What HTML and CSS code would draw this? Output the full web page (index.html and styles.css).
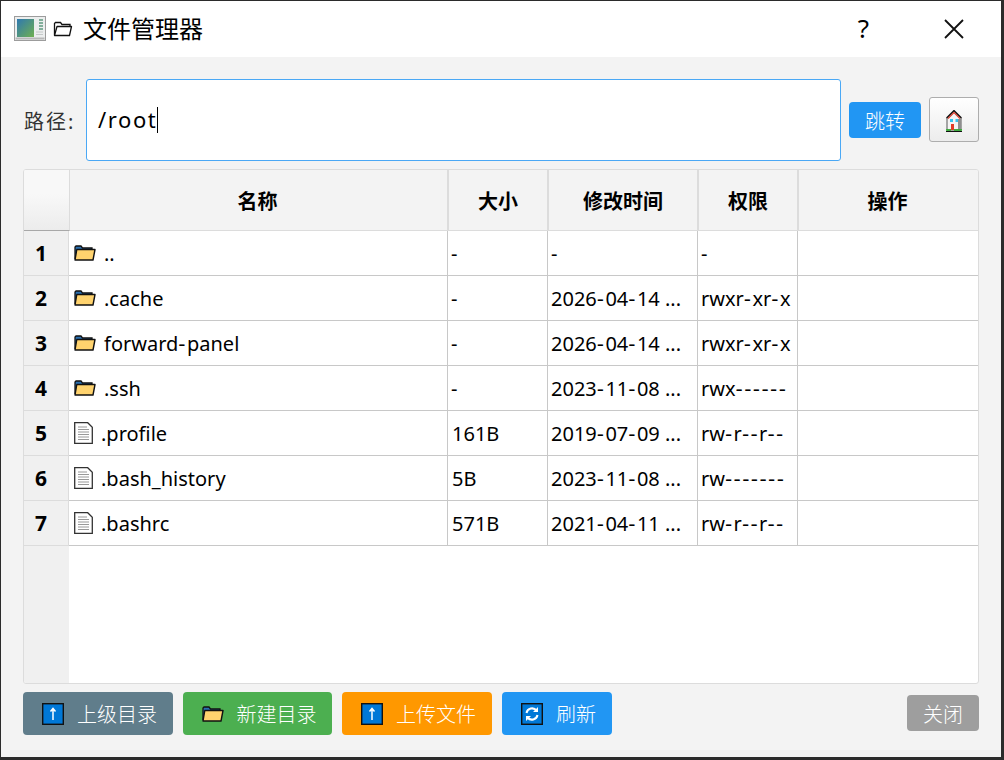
FILE: index.html
```html
<!DOCTYPE html>
<html lang="zh-CN">

<head>
    <meta charset="UTF-8">
    <title>文件管理器</title>
    <link rel="stylesheet" href="styles.css">
</head>

<body>
    <svg class="defs" width="0" height="0">
        <symbol id="folder" viewBox="0 0 22 16">
            <path d="M1 14V2L2 1h5l1.500 2H18v2" fill="#2a6fb0" stroke="#111" stroke-width="1.300"/>
            <path d="M1 15L2.800 4.500H21L19 15z" fill="#ffd36e" stroke="#111" stroke-width="1.400" stroke-linejoin="round"/>
        </symbol>
        <symbol id="file" viewBox="0 0 19 22">
            <path d="M.7.7h13l4.600 4.600v16H.7z" fill="#fff" stroke="#333" stroke-width="1.300"/>
            <path d="M4 5h9M4 7.500h11M4 10h11M4 12.500h11M4 15h11M4 17.500h11" stroke="#999" stroke-width="1"/>
        </symbol>
        <symbol id="up" viewBox="0 0 22 22">
            <rect x=".7" y=".7" width="20.600" height="20.600" fill="#0078d7" stroke="#111" stroke-width="1.400"/>
            <path d="M11 17V6M8.500 8.500L11 5.500l2.500 3" fill="none" stroke="#fff" stroke-width="1.500"/>
        </symbol>
    </svg>

    <div class="window">
        <header class="titlebar">
            <svg class="app-icon" width="32" height="25" viewBox="0 0 32 25">
                <defs>
                    <linearGradient id="screen" x1="0" y1="0" x2="1" y2="1">
                        <stop offset="0" stop-color="#2f78b0"/>
                        <stop offset="1" stop-color="#6fb050"/>
                    </linearGradient>
                </defs>
                <rect x=".5" y=".5" width="31" height="24" fill="#eceeee" stroke="#9c9c9c"/>
                <rect x="1.500" y="21.500" width="29" height="2" fill="#b8b8b8"/>
                <rect x="3" y="3" width="17" height="18" fill="url(#screen)"/>
                <path d="M25 4h4M25 7h4M25 10h4M25 13h4" stroke="#5f9a80" stroke-width="1.500"/>
                <path d="M22 16h7M22 18.500h7" stroke="#c4c8c8" stroke-width="1"/>
            </svg>
            <svg class="title-folder" width="20" height="16" viewBox="0 0 20 16">
                <path d="M1.500 14V2.500L2.500 1.500h5l1.500 2h8v2" fill="none" stroke="#111" stroke-width="1.300"/>
                <path d="M1.500 14.500L4 5.500h14.500l-2 9z" fill="#fff" stroke="#111" stroke-width="1.300" stroke-linejoin="round"/>
            </svg>
            <span class="title-text">文件管理器</span>
            <span class="help">?</span>
            <svg class="close-x" width="20" height="20" viewBox="0 0 20 20">
                <path d="M1 1l18 18M19 1L1 19" stroke="#111" stroke-width="1.800"/>
            </svg>
        </header>

        <main class="content">
            <div class="path-row">
                <label class="path-label">路径:</label>
                <div class="path-input"><span class="path-value">/root</span><span class="caret"></span></div>
                <button class="btn btn-go">跳转</button>
                <button class="btn-home">
                    <svg width="16" height="22" viewBox="0 0 16 22">
                        <path d="M8 1L1 8v12h14V8z" fill="#f4f4f4" stroke="#555" stroke-width="1"/>
                        <path d="M8 .5L.5 8M8 .5L15.500 8" stroke="#111" stroke-width="1.200"/>
                        <path d="M8 2.500L2 8.500M8 2.500l6 6" stroke="#d43c2c" stroke-width="1.200"/>
                        <rect x="4" y="9" width="3" height="3" fill="#35c4f0"/>
                        <rect x="9.500" y="9" width="3" height="3" fill="#35c4f0"/>
                        <rect x="5" y="14" width="3" height="6" fill="#e23d28"/>
                        <rect x="12" y="9" width="3" height="11" fill="#8f8f8f"/>
                        <path d="M0 21h16v1H0z" fill="#111"/>
                        <path d="M0 20h5M8 20h8" stroke="#22b022" stroke-width="1.500"/>
                    </svg>
                </button>
            </div>

            <div class="file-table">
                <div class="table-head">
                    <div class="corner"></div>
                    <div class="th th-name">名称</div>
                    <div class="th">大小</div>
                    <div class="th">修改时间</div>
                    <div class="th">权限</div>
                    <div class="th">操作</div>
                </div>

                <div class="table-row">
                    <div class="row-num">1</div>
                    <div class="td name"><svg class="ico-folder"><use href="#folder"/></svg>..</div>
                    <div class="td">-</div>
                    <div class="td">-</div>
                    <div class="td">-</div>
                    <div class="td"></div>
                </div>
                <div class="table-row">
                    <div class="row-num">2</div>
                    <div class="td name"><svg class="ico-folder"><use href="#folder"/></svg>.cache</div>
                    <div class="td">-</div>
                    <div class="td"><span>2026<i class="dash">-</i>04<i class="dash">-</i>14 ...</span></div>
                    <div class="td"><span>rwxr<i class="dash">-</i>xr<i class="dash">-</i>x</span></div>
                    <div class="td"></div>
                </div>
                <div class="table-row">
                    <div class="row-num">3</div>
                    <div class="td name"><svg class="ico-folder"><use href="#folder"/></svg><span>forward<i class="dash">-</i>panel</span></div>
                    <div class="td">-</div>
                    <div class="td"><span>2026<i class="dash">-</i>04<i class="dash">-</i>14 ...</span></div>
                    <div class="td"><span>rwxr<i class="dash">-</i>xr<i class="dash">-</i>x</span></div>
                    <div class="td"></div>
                </div>
                <div class="table-row">
                    <div class="row-num">4</div>
                    <div class="td name"><svg class="ico-folder"><use href="#folder"/></svg>.ssh</div>
                    <div class="td">-</div>
                    <div class="td"><span>2023<i class="dash">-</i>11<i class="dash">-</i>08 ...</span></div>
                    <div class="td"><span>rwx<i class="dash">------</i></span></div>
                    <div class="td"></div>
                </div>
                <div class="table-row">
                    <div class="row-num">5</div>
                    <div class="td name"><svg class="ico-file"><use href="#file"/></svg>.profile</div>
                    <div class="td size">161B</div>
                    <div class="td"><span>2019<i class="dash">-</i>07<i class="dash">-</i>09 ...</span></div>
                    <div class="td"><span>rw<i class="dash">-</i>r<i class="dash">--</i>r<i class="dash">--</i></span></div>
                    <div class="td"></div>
                </div>
                <div class="table-row">
                    <div class="row-num">6</div>
                    <div class="td name"><svg class="ico-file"><use href="#file"/></svg>.bash_history</div>
                    <div class="td size">5B</div>
                    <div class="td"><span>2023<i class="dash">-</i>11<i class="dash">-</i>08 ...</span></div>
                    <div class="td"><span>rw<i class="dash">-------</i></span></div>
                    <div class="td"></div>
                </div>
                <div class="table-row">
                    <div class="row-num">7</div>
                    <div class="td name"><svg class="ico-file"><use href="#file"/></svg>.bashrc</div>
                    <div class="td size">571B</div>
                    <div class="td"><span>2021<i class="dash">-</i>04<i class="dash">-</i>11 ...</span></div>
                    <div class="td"><span>rw<i class="dash">-</i>r<i class="dash">--</i>r<i class="dash">--</i></span></div>
                    <div class="td"></div>
                </div>

                <div class="table-empty">
                    <div class="rail"></div>
                </div>
            </div>

            <div class="actions">
                <button class="btn btn-action btn-parent"><svg class="ico-btn"><use href="#up"/></svg>上级目录</button>
                <button class="btn btn-action btn-new"><svg class="ico-btn-folder"><use href="#folder"/></svg>新建目录</button>
                <button class="btn btn-action btn-upload"><svg class="ico-btn"><use href="#up"/></svg>上传文件</button>
                <button class="btn btn-action btn-refresh">
                    <svg class="ico-btn" viewBox="0 0 22 22">
                        <rect x=".7" y=".7" width="20.600" height="20.600" fill="#0078d7" stroke="#111" stroke-width="1.400"/>
                        <path d="M5.500 10a5.700 5.700 0 0 1 10-2.500M16.500 12a5.700 5.700 0 0 1-10 2.500" fill="none" stroke="#fff" stroke-width="2"/>
                        <path d="M17 4v5h-5zM5 18v-5h5z" fill="#fff"/>
                    </svg>刷新</button>
                <button class="btn btn-close">关闭</button>
            </div>
        </main>
    </div>
</body>

</html>
```

FILE: styles.css
```css
* {
    box-sizing: border-box;
}

html,
body {
    margin: 0;
    height: 100%;
    background-color: #2b2b2b;
}

body {
    font-family: "Noto Sans", "Noto Sans CJK SC", sans-serif;
    color: #000;
    overflow: hidden;
}

.defs {
    display: block;
    height: 0;
}

.window {
    margin: 1px 3px 0 1px;
    height: 756px;
    display: flex;
    flex-direction: column;
    background-color: #f3f3f3;
}

/* title bar */
.titlebar {
    height: 56px;
    flex: none;
    background-color: #fff;
    display: flex;
    align-items: center;
    padding-left: 13px;
}

.app-icon {
    margin-top: -2px;
}

.title-folder {
    margin-left: 7px;
}

.title-text {
    margin-left: 10px;
    font-size: 24px;
    line-height: 30px;
}

.help {
    margin-left: auto;
    font-size: 26px;
    line-height: 30px;
    margin-top: -2px;
}

.close-x {
    margin-left: 75px;
    margin-right: 37px;
}

/* main area */
.content {
    flex: 1;
    padding: 22px 22px 22px 22px;
    display: flex;
    flex-direction: column;
}

.path-row {
    height: 82px;
    flex: none;
    display: flex;
    align-items: center;
}

.path-label {
    width: 63px;
    padding-left: 1px;
    font-size: 20px;
    font-weight: 400;
    letter-spacing: 2px;
    color: #333;
    white-space: nowrap;
}

.path-input {
    width: 755px;
    height: 82px;
    background-color: #fff;
    border: 1px solid #4aa8f5;
    border-radius: 3px;
    padding-left: 11px;
    display: flex;
    align-items: center;
}

.path-value {
    font-size: 22px;
    line-height: 26px;
    letter-spacing: 1.600px;
    margin-top: -2px;
}

.caret {
    width: 1px;
    height: 26px;
    background-color: #000;
}

.btn {
    border: none;
    border-radius: 4px;
    color: #fff;
    font-family: inherit;
    font-size: 20px;
    font-weight: 300;
    padding: 0;
    cursor: pointer;
}

.btn-go {
    width: 72px;
    height: 36px;
    margin-left: 8px;
    background-color: #2196f3;
}

.btn-home {
    width: 50px;
    height: 45px;
    margin-left: 8px;
    margin-bottom: 2px;
    padding: 3px 0 0;
    background: linear-gradient(#fff, #ececec);
    border: 1px solid #adadad;
    border-radius: 3px;
    display: flex;
    align-items: center;
    justify-content: center;
}

/* table */
.file-table {
    height: 515px;
    margin-top: 8px;
    flex: none;
    display: flex;
    flex-direction: column;
    background-color: #fff;
    border: 1px solid #dcdcdc;
    border-radius: 3px;
    overflow: hidden;
}

.table-head {
    height: 61px;
    flex: none;
    display: grid;
    grid-template-columns: 46px 379px 100px 150px 100px 1fr;
    background-color: #f3f3f3;
    border-bottom: 1px solid #dcdcdc;
}

.corner {
    background: linear-gradient(#f8f8f8 40%, #ececec);
    border-bottom: 1px solid #a8a8a8;
    border-right: 1px solid #dcdcdc;
    margin-bottom: -1px;
}

.th {
    display: flex;
    align-items: center;
    justify-content: center;
    font-size: 20px;
    font-weight: 700;
    border-right: 2px solid #dcdcdc;
}

.th-name {
    padding-right: 2px;
}

.th:last-child {
    padding-right: 2px;
    border-right: none;
}

.table-row {
    height: 45px;
    flex: none;
    display: grid;
    grid-template-columns: 45px 379px 100px 150px 100px 1fr;
    border-bottom: 1px solid #c8c8c8;
}

.row-num {
    display: flex;
    align-items: center;
    justify-content: center;
    padding-right: 10px;
    font-size: 21px;
    font-weight: 700;
    background-color: #f0f0f0;
    border-right: 1px solid #dcdcdc;
    border-bottom: 1px solid #dcdcdc;
    margin-bottom: -1px;
}

.td {
    display: flex;
    align-items: center;
    padding-left: 3px;
    font-size: 20px;
    white-space: nowrap;
    border-right: 1px solid #c8c8c8;
}

.td:last-child {
    border-right: none;
}

.dash {
    font-family: "DejaVu Sans", sans-serif;
    font-style: normal;
    letter-spacing: 1.400px;
}

.name {
    padding-left: 5px;
}

.size {
    padding-left: 4px;
}

.ico-folder {
    width: 22px;
    height: 16px;
    margin-right: 8px;
}

.ico-file {
    width: 19px;
    height: 22px;
    margin-right: 8px;
}

.table-empty {
    flex: 1;
    display: flex;
}

.rail {
    width: 45px;
    background-color: #f0f0f0;
}

/* bottom buttons */
.actions {
    margin-top: 8px;
    height: 43px;
    flex: none;
    display: flex;
    align-items: center;
    gap: 10px;
}

.btn-action {
    height: 43px;
    padding-left: 3px;
    display: flex;
    align-items: center;
    justify-content: center;
}

.btn-parent {
    width: 150px;
    background-color: #607d8b;
}

.btn-new {
    width: 149px;
    background-color: #4caf50;
}

.btn-upload {
    width: 150px;
    background-color: #ff9800;
}

.btn-refresh {
    width: 110px;
    background-color: #2196f3;
}

.ico-btn {
    width: 22px;
    height: 22px;
    margin-right: 13px;
}

.ico-btn-folder {
    width: 22px;
    height: 16px;
    margin-right: 13px;
}

.btn-close {
    width: 72px;
    height: 36px;
    margin-left: auto;
    margin-bottom: 1px;
    background-color: #9e9e9e;
}
```
